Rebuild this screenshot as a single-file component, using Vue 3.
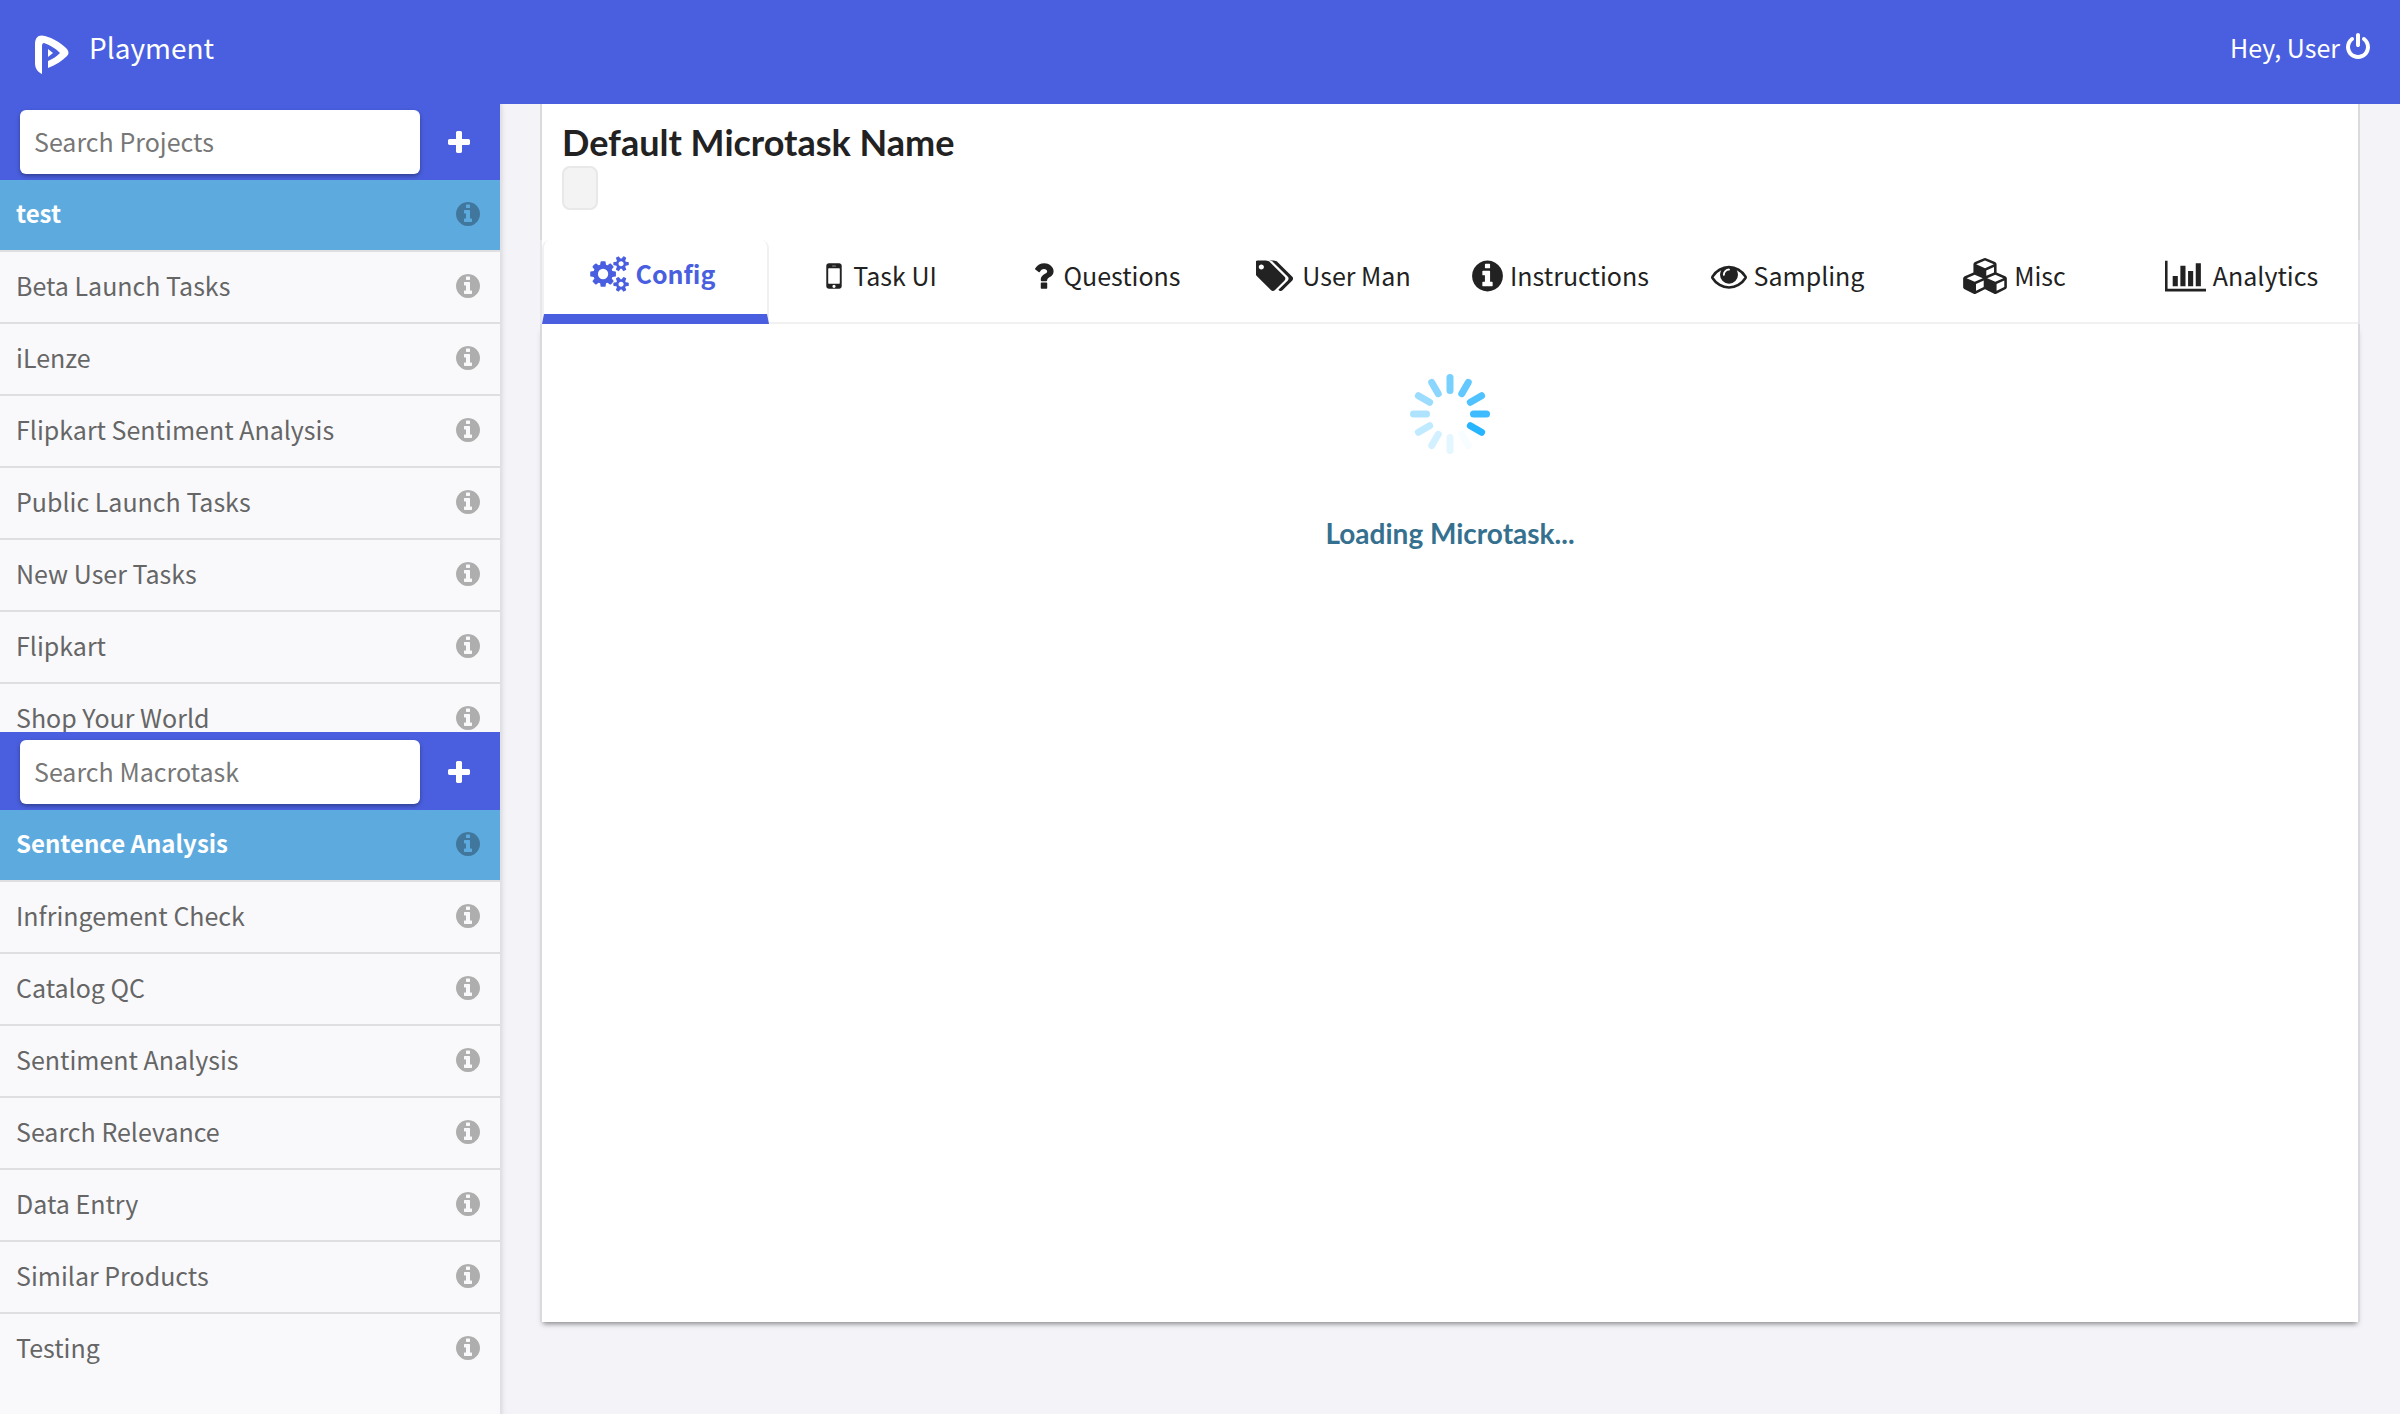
<script setup>
import { ref } from 'vue'

const projectQuery = ref('')
const macrotaskQuery = ref('')

const projects = [
  'test',
  'Beta Launch Tasks',
  'iLenze',
  'Flipkart Sentiment Analysis',
  'Public Launch Tasks',
  'New User Tasks',
  'Flipkart',
  'Shop Your World',
]

const macrotasks = [
  'Sentence Analysis',
  'Infringement Check',
  'Catalog QC',
  'Sentiment Analysis',
  'Search Relevance',
  'Data Entry',
  'Similar Products',
  'Testing',
]

const infoPath =
  'M1152 1376v-160q0-14-9-23t-23-9h-96v-512q0-14-9-23t-23-9h-320q-14 0-23 9t-9 23v160q0 14 9 23t23 9h96v320h-96q-14 0-23 9t-9 23v160q0 14 9 23t23 9h448q14 0 23-9t9-23zm-128-896v-160q0-14-9-23t-23-9h-192q-14 0-23 9t-9 23v160q0 14 9 23t23 9h192q14 0 23-9t9-23zm640 416q0 209-103 385.500t-279.500 279.500-385.500 103-385.500-103-279.500-279.500-103-385.500 103-385.500 279.500-279.500 385.500-103 385.500 103 279.500 279.500 103 385.500z'
const plusPath =
  'M1600 736v192q0 40-28 68t-68 28h-416v416q0 40-28 68t-68 28h-192q-40 0-68-28t-28-68v-416h-416q-40 0-68-28t-28-68v-192q0-40 28-68t68-28h416v-416q0-40 28-68t68-28h192q40 0 68 28t28 68v416h416q40 0 68 28t28 68z'

const tabs = [
  {
    label: 'Config',
    width: 39,
    box: '0 0 1920 1792',
    path: 'M896 896q0-106-75-181t-181-75-181 75-75 181 75 181 181 75 181-75 75-181zm768 512q0-52-38-90t-90-38-90 38-38 90q0 53 37.500 90.500t90.500 37.500 90.500-37.500 37.500-90.500zm0-1024q0-52-38-90t-90-38-90 38-38 90q0 53 37.500 90.500t90.500 37.500 90.500-37.500 37.500-90.500zm-384 421v185q0 10-7 19.500t-16 10.500l-155 24q-11 35-32 76 34 48 90 115 7 11 7 20 0 12-7 19-23 30-82.500 89.500t-78.500 59.500q-11 0-21-7l-115-90q-37 19-77 31-11 108-23 155-7 24-30 24h-186q-11 0-20-7.500t-10-17.500l-23-153q-34-10-75-31l-118 89q-7 7-20 7-11 0-21-8-144-133-144-160 0-9 7-19 10-14 41-53t47-61q-23-44-35-82l-152-24q-10-1-17-9.500t-7-19.500v-185q0-10 7-19.500t16-10.500l155-24q11-35 32-76-34-48-90-115-7-11-7-20 0-12 7-20 22-30 82-89t79-59q11 0 21 7l115 90q34-18 77-32 11-108 23-154 7-24 30-24h186q11 0 20 7.500t10 17.500l23 153q34 10 75 31l118-89q8-7 20-7 11 0 21 8 144 133 144 160 0 8-7 19-12 16-42 54t-45 60q23 48 34 82l152 23q10 2 17 10.500t7 19.500zm640 533v140q0 16-149 31-12 27-30 52 51 113 51 138 0 4-4 7-122 71-124 71-8 0-46-47t-52-68q-20 2-30 2t-30-2q-14 21-52 68t-46 47q-2 0-124-71-4-3-4-7 0-25 51-138-18-25-30-52-149-15-149-31v-140q0-16 149-31 13-29 30-52-51-113-51-138 0-4 4-7 4-2 35-20t59-34 30-16q8 0 46 46.500t52 67.500q20-2 30-2t30 2q51-71 92-112l6-2q4 0 124 70 4 3 4 7 0 25-51 138 17 23 30 52 149 15 149 31zm0-1024v140q0 16-149 31-12 27-30 52 51 113 51 138 0 4-4 7-122 71-124 71-8 0-46-47t-52-68q-20 2-30 2t-30-2q-14 21-52 68t-46 47q-2 0-124-71-4-3-4-7 0-25 51-138-18-25-30-52-149-15-149-31v-140q0-16 149-31 13-29 30-52-51-113-51-138 0-4 4-7 4-2 35-20t59-34 30-16q8 0 46 46.500t52 67.500q20-2 30-2t30 2q51-71 92-112l6-2q4 0 124 70 4 3 4 7 0 25-51 138 17 23 30 52 149 15 149 31z',
  },
  {
    label: 'Task UI',
    width: 24,
    box: '299 0 1194 1792',
    path: 'M976 1408q0-33-23.500-56.500t-56.500-23.500-56.500 23.500-23.500 56.500 23.500 56.500 56.500 23.500 56.500-23.500 23.500-56.500zm208-160v-704q0-13-9.500-22.500t-22.500-9.500h-512q-13 0-22.500 9.500t-9.500 22.500v704q0 13 9.500 22.500t22.500 9.500h512q13 0 22.500-9.500t9.500-22.500zm-192-848q0-16-16-16h-160q-16 0-16 16t16 16h160q16 0 16-16zm288-16v1024q0 52-38 90t-90 38h-512q-52 0-90-38t-38-90v-1024q0-52 38-90t90-38h512q52 0 90 38t38 90z',
  },
  {
    label: 'Questions',
    width: 24,
    box: '331 0 1194 1792',
    path: 'M1088 1256v240q0 16-12 28t-28 12h-240q-16 0-28-12t-12-28v-240q0-16 12-28t28-12h240q16 0 28 12t12 28zm316-600q0 54-15.500 101t-35 76.500-55 59.500-57.500 43.500-61 35.500q-41 23-68.500 65t-27.500 67q0 17-12 32.500t-28 15.500h-240q-15 0-25.500-18.500t-10.500-37.500v-45q0-83 65-156.500t143-108.500q59-27 84-56t25-76q0-42-46.500-74t-107.500-32q-65 0-108 29-35 25-107 115-13 16-31 16-12 0-25-8l-164-125q-13-10-15.500-25t5.500-28q160-266 464-266 80 0 161 31t146 83 106 127.500 41 158.500z',
  },
  {
    label: 'User Man',
    width: 39,
    box: '0 0 1920 1792',
    path: 'M384 448q0-53-37.500-90.500t-90.500-37.500-90.500 37.500-37.500 90.500 37.500 90.500 90.500 37.500 90.500-37.500 37.500-90.500zm1067 576q0 53-37 90l-491 492q-39 37-91 37-53 0-90-37l-715-716q-38-37-64.500-101t-26.500-117v-416q0-52 38-90t90-38h416q53 0 117 26.500t102 64.500l715 714q37 39 37 91zm384 0q0 53-37 90l-491 492q-39 37-91 37-36 0-59-14t-53-45l470-470q37-37 37-90 0-52-37-91l-715-714q-38-38-102-64.500t-117-26.500h224q53 0 117 26.500t102 64.500l715 714q37 39 37 91z',
  },
  { label: 'Instructions', width: 31, box: '128 0 1536 1792', path: infoPath },
  {
    label: 'Sampling',
    width: 36,
    box: '0 0 1792 1792',
    path: 'M1664 960q-152-236-381-353 61 104 61 225 0 185-131.500 316.500t-316.500 131.500-316.500-131.500-131.500-316.500q0-121 61-225-229 117-381 353 133 205 333.500 326.500t434.500 121.500 434.500-121.500 333.500-326.500zm-720-384q0-20-14-34t-34-14q-125 0-214.500 89.500t-89.500 214.500q0 20 14 34t34 14 34-14 14-34q0-86 61-147t147-61q20 0 34-14t14-34zm848 384q0 34-20 69-140 230-376.500 368.500t-499.500 138.500-499.500-139-376.500-368q-20-35-20-69t20-69q140-229 376.500-368t499.500-139 499.500 139 376.500 368q20 35 20 69z',
  },
  {
    label: 'Misc',
    width: 44,
    box: '0 0 2176 1792',
    path: 'M640 1632l384-192v-314l-384 164v342zm-64-454l404-173-404-173-404 173zm1088 454l384-192v-314l-384 164v342zm-64-454l404-173-404-173-404 173zm-448-293l384-165v-266l-384 164v267zm-64-379l441-189-441-189-441 189zm1088 518v416q0 36-19 67t-52 47l-448 224q-25 14-57 14t-57-14l-448-224q-5-2-7-4-2 2-7 4l-448 224q-25 14-57 14t-57-14l-448-224q-33-16-52-47t-19-67v-416q0-38 21.500-70t56.500-48l434-186v-400q0-38 21.500-70t56.500-48l448-192q23-10 50-10t50 10l448 192q35 16 56.500 48t21.500 70v400l434 186q36 16 57 48t21 70z',
  },
  {
    label: 'Analytics',
    width: 41,
    box: '0 0 2048 1792',
    path: 'M640 896v512h-256v-512h256zm384-512v1024h-256v-1024h256zm1024 1152v128h-2048v-1536h128v1408h1920zm-640-896v768h-256v-768h256zm384-384v1152h-256v-1152h256z',
  },
]

// Spoke colours, clockwise from the top
const spokes = [
  '#78d0ff', '#62c8ff', '#50c2ff', '#3ebcff', '#28b5ff', '#f8fdff',
  '#e4f6ff', '#d2f0ff', '#c0eaff', '#aee3ff', '#9bdcff', '#8ad6ff',
]
</script>

<template>
  <div class="app">
    <header class="topbar">
      <a class="brand" href="#">
        <svg class="logo" width="34" height="40" viewBox="0 0 34 40" aria-hidden="true">
          <path d="M7 39C3 37 0 34 0 28V9C0 2 4-1 10 1C18 3 26 8 32 14Q35 18 32 21C27 26 21 30 13 33V26C18 24 22 21 25 18C20 13 15 10 9 8Q7 8 7 11Z" fill="#fff" />
          <path d="M13 14L18 18L13 22Z" fill="#fff" />
        </svg>
        <span>Playment</span>
      </a>
      <button class="user" type="button">
        <span>Hey, User</span>
        <svg width="24" height="28" viewBox="128 0 1536 1792" aria-hidden="true">
          <path fill="currentColor" d="M1664 896q0 156-61 298t-164 245-245 164-298 61-298-61-245-164-164-245-61-298q0-182 80.500-343t226.500-270q43-32 95.500-25t83.500 50q32 42 24.500 94.500t-49.500 84.500q-98 74-151.500 181t-53.500 228q0 104 40.500 198.500t109.500 163.500 163.500 109.500 198.500 40.500 198.500-40.500 163.500-109.500 109.500-163.500 40.500-198.500q0-121-53.500-228t-151.500-181q-42-32-49.500-84.500t24.500-94.500q31-43 84-50t95 25q146 109 226.500 270t80.500 343zm-640-768v640q0 52-38 90t-90 38-90-38-38-90v-640q0-52 38-90t90-38 90 38 38 90z" />
        </svg>
      </button>
    </header>

    <div class="body">
      <aside class="sidebar">
        <section class="panel panel-projects">
          <div class="search">
            <input v-model="projectQuery" type="text" placeholder="Search Projects" aria-label="Search Projects" />
            <button type="button" aria-label="Add project">
              <svg width="28" height="28" viewBox="0 -64 1792 1792"><path fill="currentColor" :d="plusPath" /></svg>
            </button>
          </div>
          <ul class="list">
            <li v-for="(name, i) in projects" :key="name" :class="{ active: i === 0 }">
              <a href="#">{{ name }}</a>
              <button type="button" :aria-label="'About ' + name">
                <svg width="24" height="28" viewBox="128 0 1536 1792"><path fill="currentColor" :d="infoPath" /></svg>
              </button>
            </li>
          </ul>
        </section>
        <section class="panel panel-macrotasks">
          <div class="search">
            <input v-model="macrotaskQuery" type="text" placeholder="Search Macrotask" aria-label="Search Macrotask" />
            <button type="button" aria-label="Add macrotask">
              <svg width="28" height="28" viewBox="0 -64 1792 1792"><path fill="currentColor" :d="plusPath" /></svg>
            </button>
          </div>
          <ul class="list">
            <li v-for="(name, i) in macrotasks" :key="name" :class="{ active: i === 0 }">
              <a href="#">{{ name }}</a>
              <button type="button" :aria-label="'About ' + name">
                <svg width="24" height="28" viewBox="128 0 1536 1792"><path fill="currentColor" :d="infoPath" /></svg>
              </button>
            </li>
          </ul>
        </section>
      </aside>

      <main class="content">
        <div class="card-head">
          <h1>Default Microtask Name</h1>
          <span class="label"></span>
        </div>
        <nav class="tabs">
          <a v-for="(tab, i) in tabs" :key="tab.label" href="#" class="tab" :class="{ current: i === 0 }">
            <svg :width="tab.width" height="36" :viewBox="tab.box" aria-hidden="true"><path fill="currentColor" :d="tab.path" /></svg>
            <span>{{ tab.label }}</span>
          </a>
        </nav>
        <div class="card-body">
          <svg class="spinner" width="80" height="80" viewBox="-40 -40 80 80" aria-hidden="true">
            <rect
              v-for="(color, i) in spokes"
              :key="i"
              x="-3.5"
              y="-40"
              width="7"
              height="20"
              rx="3.5"
              :fill="color"
              :transform="`rotate(${i * 30})`"
            />
          </svg>
          <h2>Loading Microtask...</h2>
        </div>
      </main>
    </div>
  </div>
</template>

<style>
body {
  background: #f3f3f8;
}
</style>

<style scoped>
.app {
  display: flex;
  flex-direction: column;
  height: 100vh;
  overflow: hidden;
  font-family: "Noto Sans CJK SC", sans-serif;
  font-size: 25px;
  line-height: 36px;
  color: #222;
}

.app * {
  box-sizing: border-box;
}

button {
  display: flex;
  align-items: center;
  padding: 0;
  border: 0;
  background: none;
  color: inherit;
  font: inherit;
  cursor: pointer;
}

a {
  color: inherit;
  text-decoration: none;
}

.topbar {
  position: relative;
  z-index: 1;
  display: flex;
  flex: none;
  align-items: flex-start;
  justify-content: space-between;
  height: 104px;
  padding: 30px 30px 0 35px;
  background: #4a5fdf;
  color: #fff;
}

.brand {
  display: flex;
  gap: 20px;
  font-size: 28px;
  line-height: 34px;
}

.logo {
  margin-top: 5px;
}

.user {
  gap: 6px;
  line-height: 34px;
}

.body {
  display: flex;
  flex: 1;
  min-height: 0;
}

.sidebar {
  display: flex;
  flex: none;
  flex-direction: column;
  width: 500px;
  background: #f9f9fc;
  box-shadow: 0 0 2px 2px #dfdfe4, 0 4px 8px rgba(34, 36, 38, 0.15);
}

.panel {
  display: flex;
  flex-direction: column;
  min-height: 0;
}

.panel-projects {
  flex: 628 1 0;
}

.panel-macrotasks {
  flex: 682 1 0;
}

.search {
  display: flex;
  flex: none;
  align-items: center;
  padding: 6px 27px 6px 20px;
  background: #4a5fdf;
  color: #fff;
}

.panel-macrotasks .search {
  padding-top: 8px;
}

.search input {
  flex: 1;
  min-width: 0;
  height: 64px;
  margin-right: 25px;
  padding: 0 14px 2px;
  border: 0;
  border-radius: 6px;
  background: #fff;
  box-shadow: 0 2px 4px rgba(0, 0, 0, 0.35);
  color: #333;
  font: inherit;
}

.search input::placeholder {
  color: #777;
  opacity: 1;
}

.list {
  flex: 1;
  min-height: 0;
  margin: 0;
  padding: 0;
  overflow: hidden;
  list-style: none;
}

.list li {
  display: flex;
  align-items: center;
  justify-content: space-between;
  height: 72px;
  padding: 0 20px 2px 16px;
  border-bottom: 2px solid #dfdfe1;
  color: #666;
}

.list li:last-child {
  padding-bottom: 4px;
  border-bottom: 0;
}

.list a {
  padding-bottom: 2px;
}

.list button {
  color: #aeaeae;
}

.list li.active {
  background: #5daadf;
  background-clip: padding-box;
  color: #fff;
  font-size: 24px;
  font-weight: 700;
}

.list .active button {
  color: #41779c;
}

.content {
  display: flex;
  flex: 1;
  flex-direction: column;
  min-width: 0;
  margin: 0 40px 92px;
}

.card-head {
  flex: none;
  height: 136px;
  padding: 16px 20px 0;
  border: solid #dadadc;
  border-width: 0 2px;
  background: #fff;
}

h1,
h2 {
  margin: 0;
  font-family: Lato, sans-serif;
  font-weight: 700;
}

h1 {
  font-size: 36px;
  line-height: 44px;
}

.label {
  display: block;
  width: 36px;
  height: 44px;
  margin-top: 2px;
  border: 2px solid #e8e8e8;
  border-radius: 8px;
  background: #f3f3f3;
}

.tabs {
  display: grid;
  flex: none;
  grid-template-columns: repeat(8, minmax(0, 1fr));
  height: 84px;
  padding: 0 2px;
  background: linear-gradient(#fff, #fff) content-box, #e6e6ec;
}

.tab {
  display: flex;
  align-items: center;
  justify-content: center;
  gap: 7px;
  padding: 0 6px 10px 0;
  border-bottom: 2px solid #f1f1f2;
  white-space: nowrap;
}

.tab span {
  padding-bottom: 2px;
}

.tab.current {
  padding: 0 6px 6px 0;
  border: solid #f1f1f2;
  border-width: 0 2px 10px;
  border-bottom-color: #4a5fdf;
  border-radius: 8px 8px 0 0;
  color: #4a5fdf;
  font-weight: 700;
}

.card-body {
  display: flex;
  flex: 1;
  flex-direction: column;
  align-items: center;
  gap: 62px;
  padding-top: 50px;
  border: solid #dadade;
  border-width: 0 2px;
  background: #fff;
  box-shadow: 0 5px 5px -3px rgba(34, 36, 38, 0.5);
}

.spinner {
  flex: none;
}

h2 {
  color: #36708f;
  font-size: 28px;
  line-height: 34px;
}
</style>
